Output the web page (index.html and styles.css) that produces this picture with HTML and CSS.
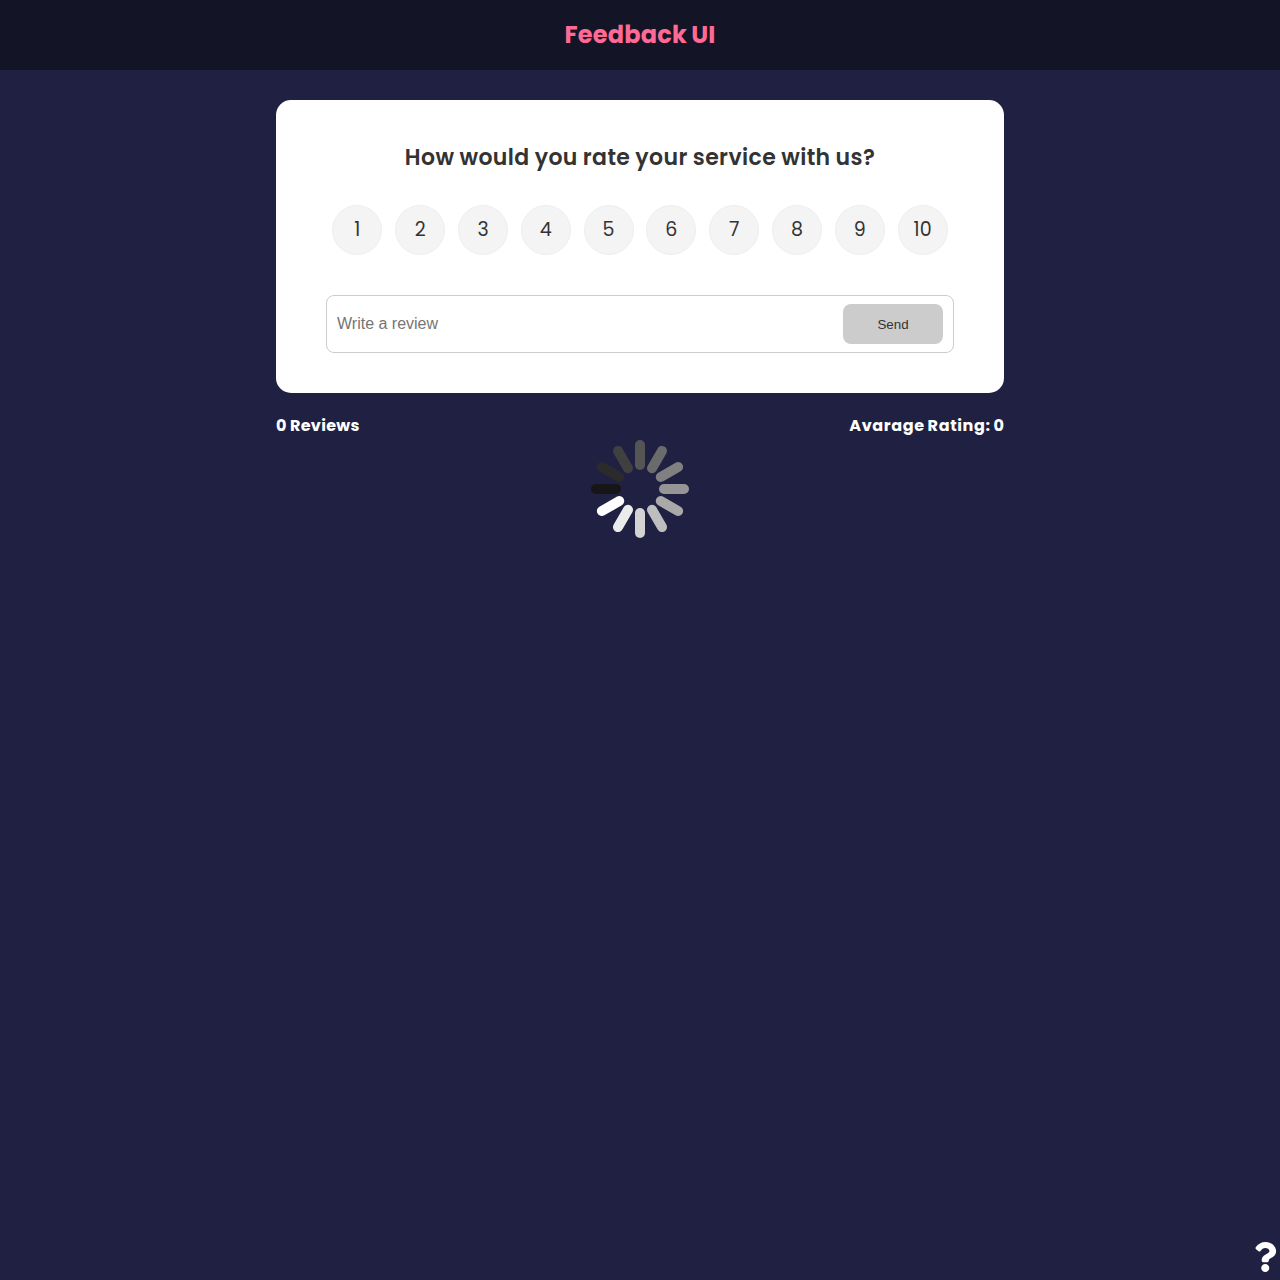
FILE: index.html
```html
<!DOCTYPE html>
<html lang="en">
<head>
<meta charset="utf-8">
<title>Feedback UI</title>
<link rel="stylesheet" href="styles.css">
</head>
<body>
<header class="header"><h2 class="logo">Feedback UI</h2></header>
<main class="container">
  <form class="card">
    <h2 class="question">How would you rate your service with us?</h2>
    <ul class="rating">
      <li>1</li><li>2</li><li>3</li><li>4</li><li>5</li><li>6</li><li>7</li><li>8</li><li>9</li><li>10</li>
    </ul>
    <div class="input-group">
      <input class="review" type="text" placeholder="Write a review">
      <button class="send" type="button">Send</button>
    </div>
  </form>
  <div class="stats"><h4 class="count">0 Reviews</h4><h4 class="average">Avarage Rating: 0</h4></div>
  <svg class="spinner" viewBox="-50 -50 100 100" width="100" height="100" stroke-width="10" stroke-linecap="round">
    <path d="M0-24V-44" stroke="#555"/>
    <path d="M0-24V-44" stroke="#6b6b6b" transform="rotate(30)"/>
    <path d="M0-24V-44" stroke="#808080" transform="rotate(60)"/>
    <path d="M0-24V-44" stroke="#959595" transform="rotate(90)"/>
    <path d="M0-24V-44" stroke="#a9a9a9" transform="rotate(120)"/>
    <path d="M0-24V-44" stroke="#bebebe" transform="rotate(150)"/>
    <path d="M0-24V-44" stroke="#d3d3d3" transform="rotate(180)"/>
    <path d="M0-24V-44" stroke="#ebebeb" transform="rotate(210)"/>
    <path d="M0-24V-44" stroke="#fff" transform="rotate(240)"/>
    <path d="M0-24V-44" stroke="#161616" transform="rotate(270)"/>
    <path d="M0-24V-44" stroke="#2b2b2b" transform="rotate(300)"/>
    <path d="M0-24V-44" stroke="#404040" transform="rotate(330)"/>
  </svg>
</main>
<a class="about" aria-label="About">
  <svg width="22.5" height="30" viewBox="0 0 384 512" fill="#fff">
    <path d="M202.021 0C122.202 0 70.503 32.703 29.914 91.026c-7.363 10.58-5.093 25.086 5.178 32.874l43.138 32.709c10.373 7.865 25.132 6.026 33.253-4.148 25.049-31.381 43.63-49.449 82.757-49.449 30.764 0 68.816 19.799 68.816 49.631 0 22.552-18.617 34.134-48.993 51.164-35.423 19.86-82.299 44.576-82.299 106.405V320c0 13.255 10.745 24 24 24h72.471c13.255 0 24-10.745 24-24v-5.773c0-42.86 125.268-44.645 125.268-160.627C377.504 66.256 286.902 0 202.021 0zM192 373.459c-38.196 0-69.271 31.075-69.271 69.271 0 38.195 31.075 69.27 69.271 69.27s69.271-31.075 69.271-69.27-31.075-69.271-69.271-69.271z"/>
  </svg>
</a>
</body>
</html>
```
FILE: styles.css
```css
* { box-sizing: border-box; margin: 0; padding: 0; }
body {
  min-height: 1280px;
  background: #202142;
  color: #fff;
  font-family: Poppins, Inter, sans-serif;
  line-height: 1.6;
}
.header {
  height: 70px;
  display: flex;
  align-items: center;
  justify-content: center;
  background: #131426;
}
.logo { color: #ff6a95; font-size: 24px; font-weight: 700; letter-spacing: 0.22px; word-spacing: -1.2px; }
.container { width: 728px; margin: 30px auto 0; }
.card {
  height: 293px;
  padding: 40px 50px;
  background: #fff;
  color: #333;
  border-radius: 15px;
}
.question {
  font-size: 22px;
  font-weight: 600;
  line-height: 35px;
  letter-spacing: 0.4px;
  word-spacing: -0.6px;
  text-align: center;
  white-space: nowrap;
}
.rating { display: flex; justify-content: space-around; margin: 30px 0 40px; list-style: none; }
.rating li {
  width: 50px;
  height: 50px;
  border: 1px solid #eee;
  border-radius: 50%;
  background: #f4f4f4;
  font-size: 19px;
  line-height: 47px;
  text-align: center;
}
.input-group {
  height: 58px;
  display: flex;
  align-items: center;
  padding: 8px 10px;
  border: 1px solid #ccc;
  border-radius: 8px;
}
.review { flex: 1; height: 36px; border: 0; outline: 0; font: 16px "Liberation Sans", sans-serif; }
.review::placeholder { color: #757575; }
.send {
  width: 100px;
  height: 40px;
  border: 0;
  border-radius: 8px;
  background: #ccc;
  color: #333;
  font: 13.333px "Liberation Sans", sans-serif;
}
.stats { display: flex; justify-content: space-between; padding-top: 20px; font-size: 16px; line-height: 26px; white-space: nowrap; }
.stats h4 { font-weight: 700; }
.count { letter-spacing: 0.3px; word-spacing: -0.5px; }
.average { letter-spacing: 0.63px; word-spacing: -1.2px; margin-right: -0.6px; }
.spinner { display: block; margin: 0 auto; }
.about { position: fixed; right: 3.5px; bottom: 8px; }
.about svg { display: block; }
```
